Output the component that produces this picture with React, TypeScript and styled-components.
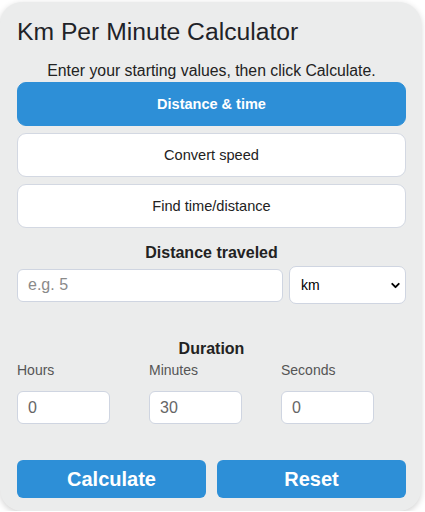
import React from "react";
import styled, { createGlobalStyle } from "styled-components";
import { ChevronDown } from "lucide-react";

const Global = createGlobalStyle`
  html, body { margin: 0; padding: 0; background: #ffffff; }
  body { font-family: "Liberation Sans", Arial, sans-serif; color: #222; }
  * { box-sizing: border-box; }
`;

const Card = styled.div`
  width: 421px;
  margin-top: 2px;
  background: #ebecec;
  border-radius: 22px;
  box-shadow: 0 2px 6px rgba(0, 0, 0, 0.18);
  padding: 16px 15px 13px 17px;
  display: flex;
  flex-direction: column;
`;

const Title = styled.h1`
  margin: 0;
  font-size: 24.7px;
  line-height: 28px;
  font-weight: 400;
  color: #1f2328;
`;

const Subtitle = styled.p`
  margin: 15px 0 1px;
  font-size: 15.8px;
  line-height: 20px;
  text-align: center;
  color: #222;
`;

const Tabs = styled.div`
  display: flex;
  flex-direction: column;
  gap: 7px;
`;

const Tab = styled.button<{ $active?: boolean }>`
  height: 44px;
  border-radius: 9px;
  border: 1px solid ${(p) => (p.$active ? "#2d8fd7" : "#d3d8e2")};
  background: ${(p) => (p.$active ? "#2d8fd7" : "#ffffff")};
  color: ${(p) => (p.$active ? "#ffffff" : "#222")};
  font-family: "Liberation Sans", Arial, sans-serif;
  font-size: ${(p) => (p.$active ? "14.5px" : "14.6px")};
  font-weight: ${(p) => (p.$active ? 700 : 400)};
  cursor: pointer;
`;

const SectionLabel = styled.div<{ $mt: number }>`
  margin-top: ${(p) => p.$mt}px;
  font-size: 16px;
  line-height: 20px;
  font-weight: 700;
  text-align: center;
  color: #222;
`;

const DistanceRow = styled.div`
  margin-top: 3px;
  display: flex;
  align-items: center;
  gap: 6px;
`;

const TextInput = styled.input<{ $width?: string }>`
  height: 33px;
  width: ${(p) => p.$width ?? "100%"};
  border: 1px solid #cfd5e1;
  border-radius: 6px;
  background: #fff;
  padding: 0 10px;
  font-family: "Liberation Sans", Arial, sans-serif;
  font-size: 16px;
  color: #666;
  &::placeholder { color: #8a8a8a; }
  outline: none;
`;

const DistanceInput = styled(TextInput)`
  flex: 1;
`;

const SelectWrap = styled.div`
  position: relative;
  width: 117px;
  height: 38px;
  flex: none;
`;

const Select = styled.select`
  appearance: none;
  width: 100%;
  height: 100%;
  border: 1px solid #cfd5e1;
  border-radius: 7px;
  background: #fff;
  padding: 0 11px;
  font-family: "Liberation Sans", Arial, sans-serif;
  font-size: 14px;
  color: #000;
  outline: none;
`;

const Chevron = styled(ChevronDown)`
  position: absolute;
  right: 4px;
  top: 13px;
  pointer-events: none;
  color: #000;
`;

const DurationGrid = styled.div`
  margin-top: 3px;
  display: grid;
  grid-template-columns: repeat(3, 1fr);
  column-gap: 7px;
`;

const Field = styled.div`
  display: flex;
  flex-direction: column;
  gap: 13px;
`;

const FieldLabel = styled.label`
  font-size: 14px;
  line-height: 16px;
  color: #555;
`;

const Actions = styled.div`
  margin-top: 36px;
  display: grid;
  grid-template-columns: 1fr 1fr;
  gap: 11px;
`;

const ActionButton = styled.button`
  height: 38px;
  border: none;
  border-radius: 6px;
  background: #2d8fd7;
  color: #fff;
  font-family: "Liberation Sans", Arial, sans-serif;
  font-size: 20px;
  font-weight: 700;
  cursor: pointer;
`;

export default function App() {
  return (
    <>
      <Global />
      <Card>
        <Title>Km Per Minute Calculator</Title>
        <Subtitle>Enter your starting values, then click Calculate.</Subtitle>
        <Tabs>
          <Tab $active>Distance &amp; time</Tab>
          <Tab>Convert speed</Tab>
          <Tab>Find time/distance</Tab>
        </Tabs>
        <SectionLabel $mt={15}>Distance traveled</SectionLabel>
        <DistanceRow>
          <DistanceInput placeholder="e.g. 5" />
          <SelectWrap>
            <Select defaultValue="km">
              <option value="km">km</option>
              <option value="mi">mi</option>
            </Select>
            <Chevron size={13} strokeWidth={3.5} />
          </SelectWrap>
        </DistanceRow>
        <SectionLabel $mt={35}>Duration</SectionLabel>
        <DurationGrid>
          <Field>
            <FieldLabel>Hours</FieldLabel>
            <TextInput $width="93px" defaultValue="0" />
          </Field>
          <Field>
            <FieldLabel>Minutes</FieldLabel>
            <TextInput $width="93px" defaultValue="30" />
          </Field>
          <Field>
            <FieldLabel>Seconds</FieldLabel>
            <TextInput $width="93px" defaultValue="0" />
          </Field>
        </DurationGrid>
        <Actions>
          <ActionButton>Calculate</ActionButton>
          <ActionButton>Reset</ActionButton>
        </Actions>
      </Card>
    </>
  );
}
